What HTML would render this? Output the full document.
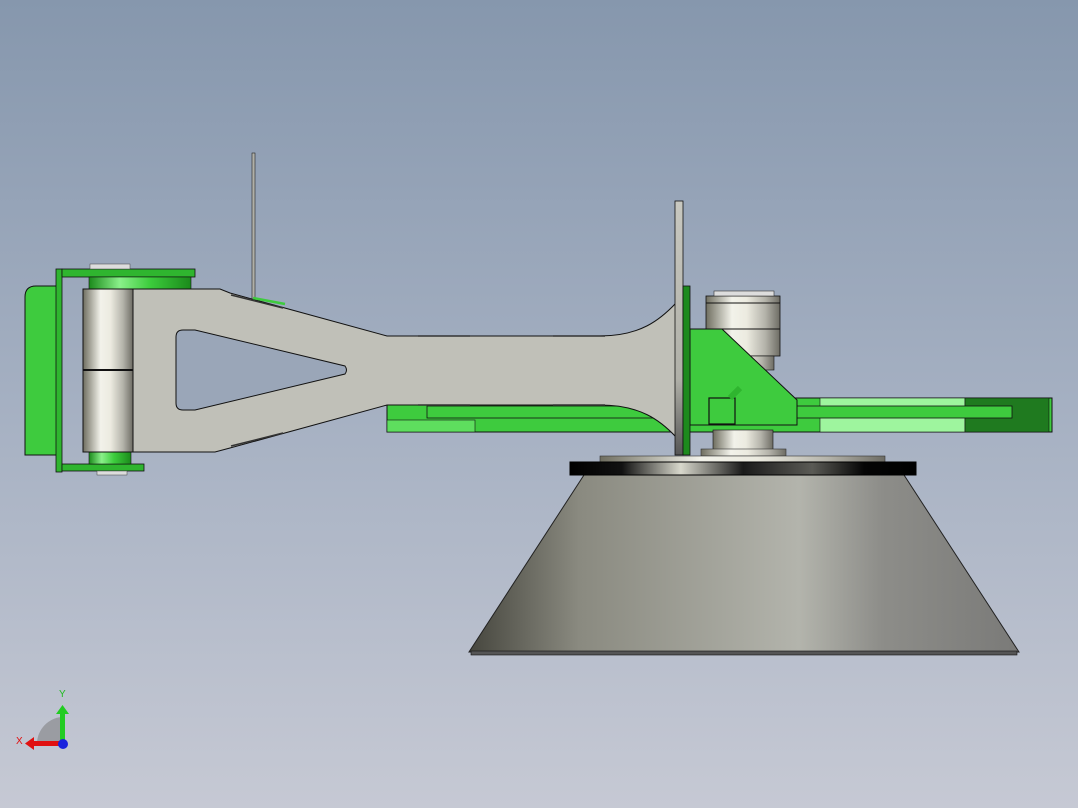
<!DOCTYPE html>
<html><head><style>
html,body{margin:0;padding:0}
body{width:1078px;height:808px;overflow:hidden;background:linear-gradient(#8697ad,#a5b0c2 50%,#c6c9d4);font-family:"Liberation Sans",sans-serif}
svg{display:block}
</style></head><body>
<svg width="1078" height="808" viewBox="0 0 1078 808" xmlns="http://www.w3.org/2000/svg">
<defs>
<linearGradient id="cyl" x1="0" x2="1"><stop offset="0" stop-color="#6f6e60"/><stop offset=".35" stop-color="#f2f2ea"/><stop offset=".55" stop-color="#ecebe0"/><stop offset=".8" stop-color="#b4b3aa"/><stop offset="1" stop-color="#6d6c64"/></linearGradient>
<linearGradient id="gring" x1="0" x2="1"><stop offset="0" stop-color="#1b8a1b"/><stop offset=".3" stop-color="#8af08a"/><stop offset=".6" stop-color="#3ccc3c"/><stop offset="1" stop-color="#1b8a1b"/></linearGradient>
<linearGradient id="cone" x1="0" x2="1"><stop offset="0" stop-color="#46463e"/><stop offset=".2" stop-color="#8a8a80"/><stop offset=".6" stop-color="#b3b4ac"/><stop offset=".75" stop-color="#8d8d89"/><stop offset="1" stop-color="#7a7a78"/></linearGradient>
<linearGradient id="disc" x1="0" x2="1"><stop offset="0" stop-color="#000"/><stop offset=".15" stop-color="#111"/><stop offset=".32" stop-color="#d8d8cc"/><stop offset=".5" stop-color="#1a1a1a"/><stop offset=".7" stop-color="#5a5a55"/><stop offset=".85" stop-color="#050505"/><stop offset="1" stop-color="#000"/></linearGradient>
<linearGradient id="plate" x1="0" x2="0" y1="0" y2="1"><stop offset="0" stop-color="#c8c8c0"/><stop offset=".7" stop-color="#b0b0a8"/><stop offset="1" stop-color="#555"/></linearGradient>
</defs>
<rect x="252" y="153" width="3" height="148" fill="#b0b0a8" stroke="#222" stroke-width=".6"/>
<path d="M57 286 H36 Q25 286 25 297 V455 H57 Z" fill="#3ecb3e" stroke="#111" stroke-width="1"/>
<rect x="56" y="269" width="6" height="203" fill="#2fb52f" stroke="#111" stroke-width=".8"/>
<rect x="62" y="269" width="133" height="8" fill="#2fb52f" stroke="#111" stroke-width=".8"/>
<rect x="62" y="464" width="82" height="7" fill="#2fb52f" stroke="#111" stroke-width=".8"/>
<rect x="90" y="264" width="40" height="5" fill="#ddd" stroke="#444" stroke-width=".5"/>
<rect x="97" y="471" width="30" height="4" fill="#ddd" stroke="#444" stroke-width=".5"/>
<rect x="89" y="277" width="102" height="12" fill="url(#gring)" stroke="#111" stroke-width=".6"/>
<rect x="89" y="452" width="42" height="12" fill="url(#gring)" stroke="#111" stroke-width=".6"/>
<rect x="387" y="398" width="665" height="34" fill="#3ecb3e" stroke="#111" stroke-width="1"/>
<rect x="387" y="420" width="88" height="12" fill="#5ede5e" stroke="#111" stroke-width=".6"/>
<rect x="820" y="398" width="145" height="34" fill="#9ef59e" stroke="#111" stroke-width=".6"/>
<rect x="965" y="398" width="84" height="34" fill="#1f7a1f" stroke="#111" stroke-width=".6"/>
<rect x="427" y="406" width="585" height="12" fill="#3ecb3e" stroke="#111" stroke-width=".8"/>
<path d="M133 289 H220 L230 293 L387 336 H600 C640 336 660 320 676 303 V437 C660 420 640 405 600 405 H387 L230 448 L215 452 H133 Z" fill="#c0c0b8" stroke="#111" stroke-width="1"/>
<path d="M183 330 H195 L345 366 Q348 370 345 374 L195 410 H183 Q176 410 176 403 V337 Q176 330 183 330 Z" fill="#9aa6b8" stroke="#111" stroke-width="1"/>
<path d="M231 295 L283 308 M231 446 L283 433 M418 336 H470 M418 405 H470 M553 336 H605 M553 405 H605" stroke="#333" stroke-width="1.5"/>
<path d="M253 298 L285 304" stroke="#3ecb3e" stroke-width="2.5"/>
<rect x="83" y="289" width="50" height="163" fill="url(#cyl)" stroke="#111" stroke-width="1"/>
<line x1="83" y1="370" x2="133" y2="370" stroke="#111" stroke-width="2"/>
<rect x="706" y="296" width="74" height="60" fill="url(#cyl)" stroke="#111" stroke-width=".8"/>
<rect x="714" y="356" width="60" height="14" fill="url(#cyl)" stroke="#111" stroke-width=".6"/>
<rect x="714" y="291" width="60" height="5" fill="#ddd" stroke="#333" stroke-width=".6"/>
<line x1="706" y1="303" x2="780" y2="303" stroke="#111"/><line x1="706" y1="329" x2="780" y2="329" stroke="#111"/>
<path d="M690 329 H722 L797 400 V425 H690 Z" fill="#3ecb3e" stroke="#111" stroke-width="1"/>
<rect x="709" y="398" width="26" height="26" fill="none" stroke="#111" stroke-width="1.2"/>
<path d="M730 398 L740 388" stroke="#2fb52f" stroke-width="6"/>
<rect x="675" y="201" width="8" height="254" fill="url(#plate)" stroke="#111" stroke-width=".8"/>
<rect x="683" y="286" width="7" height="169" fill="#1d8a1d" stroke="#111" stroke-width=".8"/>
<rect x="713" y="430" width="60" height="20" fill="url(#cyl)" stroke="#111" stroke-width=".6"/>
<rect x="701" y="449" width="85" height="7" fill="url(#cyl)" stroke="#333" stroke-width=".6"/>
<rect x="600" y="456" width="285" height="6" fill="url(#cyl)" stroke="#333" stroke-width=".6"/>
<path d="M584 475 H904 L1019 652 H469 Z" fill="url(#cone)" stroke="#222" stroke-width="1"/>
<rect x="471" y="651" width="546" height="4" fill="#555" stroke="#111" stroke-width=".6"/>
<rect x="570" y="462" width="346" height="13" fill="url(#disc)" stroke="#000"/>
<path d="M37 743 A27 27 0 0 1 62 717 V743 Z" fill="#9a9ca2"/>
<rect x="60" y="713" width="5" height="30" fill="#22cc22"/>
<path d="M56 714 L62.5 705 L69 714 Z" fill="#22cc22"/>
<rect x="33" y="741" width="28" height="5" fill="#e01010"/>
<path d="M34 737 L25 743.5 L34 750 Z" fill="#e01010"/>
<circle cx="63" cy="744" r="5" fill="#1a22dd"/>
<text x="59" y="697" font-size="10" fill="#22bb22">Y</text>
<text x="16" y="744" font-size="10" fill="#e01010">X</text>
</svg>
</body></html>
